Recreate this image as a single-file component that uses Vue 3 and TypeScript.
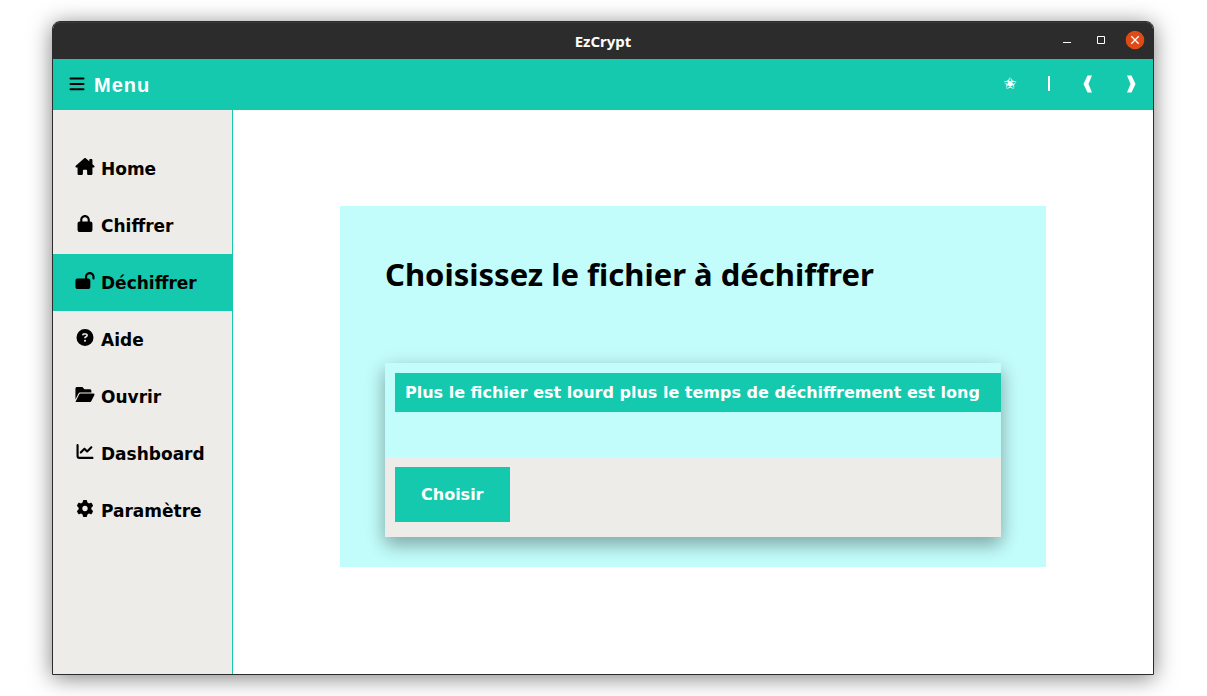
<script setup lang="ts">
import { ref } from 'vue'

interface NavItem {
  label: string
  width: number
  path: string
}

const active = ref('Déchiffrer')

const items: NavItem[] = [
  {
    label: 'Home',
    width: 576,
    path: 'M575.8 255.5c0 18-15 32.1-32 32.1h-32l.7 160.2c0 2.7-.2 5.4-.5 8.1V472c0 22.1-17.9 40-40 40H392c-22.1 0-40-17.9-40-40V384c0-17.7-14.3-32-32-32H256c-17.7 0-32 14.3-32 32v88c0 22.1-17.9 40-40 40H104c-22.1 0-40-17.9-40-40V287.6H32c-18 0-32-14-32-32.1c0-9 3-17 10-24L266.4 8c7-7 15-8 22-8s15 2 21 7L416 100.7V64c0-17.7 14.3-32 32-32h32c17.7 0 32 14.3 32 32v121l52.8 46.5c8 7 12 15 11 24z',
  },
  {
    label: 'Chiffrer',
    width: 448,
    path: 'M80 192V144C80 64.47 144.5 0 224 0C303.5 0 368 64.47 368 144V192H384C419.3 192 448 220.7 448 256V448C448 483.3 419.3 512 384 512H64C28.65 512 0 483.3 0 448V256C0 220.7 28.65 192 64 192H80zM144 192H304V144C304 99.82 268.2 64 224 64C179.8 64 144 99.82 144 144V192z',
  },
  {
    label: 'Déchiffrer',
    width: 576,
    path: 'M352 192H384C419.3 192 448 220.7 448 256V448C448 483.3 419.3 512 384 512H64C28.65 512 0 483.3 0 448V256C0 220.7 28.65 192 64 192H288V144C288 64.47 352.5 0 432 0C511.5 0 576 64.47 576 144V192C576 209.7 561.7 224 544 224C526.3 224 512 209.7 512 192V144C512 99.82 476.2 64 432 64C387.8 64 352 99.82 352 144V192z',
  },
  {
    label: 'Aide',
    width: 512,
    path: 'M256 512A256 256 0 1 0 256 0a256 256 0 1 0 0 512zM169.8 165.3c7.9-22.3 29.1-37.3 52.8-37.3h58.3c34.9 0 63.1 28.3 63.1 63.1c0 22.6-12.1 43.5-31.7 54.8L280 264.4c-.2 13-10.9 23.6-24 23.6c-13.3 0-24-10.7-24-24V250.5c0-8.6 4.6-16.5 12.1-20.8l44.3-25.4c4.7-2.7 7.6-7.7 7.6-13.1c0-8.4-6.8-15.1-15.1-15.1H222.6c-3.4 0-6.4 2.1-7.5 5.3l-.4 1.2c-4.4 12.5-18.2 19-30.6 14.6s-19-18.2-14.6-30.6l.4-1.2zM224 352a32 32 0 1 1 64 0 32 32 0 1 1-64 0z',
  },
  {
    label: 'Ouvrir',
    width: 576,
    path: 'M147.8 192H480V144C480 117.5 458.5 96 432 96h-160l-64-64h-160C21.49 32 0 53.49 0 80v328.4l90.54-181.1C101.4 205.6 123.4 192 147.8 192zM543.1 224H147.8C135.7 224 124.6 230.8 119.2 241.7L0 480h447.1c12.12 0 23.2-6.852 28.62-17.69l96-192C583.2 249 567.7 224 543.1 224z',
  },
  {
    label: 'Dashboard',
    width: 512,
    path: 'M64 400C64 408.8 71.16 416 80 416H480C497.7 416 512 430.3 512 448C512 465.7 497.7 480 480 480H80C35.82 480 0 444.2 0 400V64C0 46.33 14.33 32 32 32C49.67 32 64 46.33 64 64V400zM342.6 278.6C330.1 291.1 309.9 291.1 297.4 278.6L240 221.3L150.6 310.6C138.1 323.1 117.9 323.1 105.4 310.6C92.88 298.1 92.88 277.9 105.4 265.4L217.4 153.4C229.9 140.9 250.1 140.9 262.6 153.4L320 210.7L425.4 105.4C437.9 92.88 458.1 92.88 470.6 105.4C483.1 117.9 483.1 138.1 470.6 150.6L342.6 278.6z',
  },
  {
    label: 'Paramètre',
    width: 512,
    path: 'M495.9 166.6c3.2 8.7 .5 18.4-6.4 24.6l-43.3 39.4c1.1 8.3 1.7 16.8 1.7 25.4s-.6 17.1-1.7 25.4l43.3 39.4c6.9 6.2 9.6 15.9 6.4 24.6c-4.4 11.9-9.7 23.3-15.8 34.3l-4.7 8.1c-6.6 11-14 21.4-22.1 31.2c-5.9 7.2-15.7 9.6-24.5 6.8l-55.7-17.7c-13.4 10.3-28.2 18.9-44 25.4l-12.5 57.1c-2 9.1-9 16.3-18.2 17.8c-13.8 2.3-28 3.5-42.5 3.5s-28.7-1.2-42.5-3.5c-9.2-1.5-16.2-8.7-18.2-17.8l-12.5-57.1c-15.8-6.5-30.6-15.1-44-25.4L83.1 425.9c-8.8 2.8-18.6 .3-24.5-6.8c-8.1-9.8-15.5-20.2-22.1-31.2l-4.7-8.1c-6.1-11-11.4-22.4-15.8-34.3c-3.2-8.7-.5-18.4 6.4-24.6l43.3-39.4C64.6 273.1 64 264.6 64 256s.6-17.1 1.7-25.4L22.4 191.2c-6.9-6.2-9.6-15.9-6.4-24.6c4.4-11.9 9.7-23.3 15.8-34.3l4.7-8.1c6.6-11 14-21.4 22.1-31.2c5.9-7.2 15.7-9.6 24.5-6.8l55.7 17.7c13.4-10.3 28.2-18.9 44-25.4l12.5-57.1c2-9.1 9-16.3 18.2-17.8C227.3 1.2 241.5 0 256 0s28.7 1.2 42.5 3.5c9.2 1.5 16.2 8.7 18.2 17.8l12.5 57.1c15.8 6.5 30.6 15.1 44 25.4l55.7-17.7c8.8-2.8 18.6-.3 24.5 6.8c8.1 9.8 15.5 20.2 22.1 31.2l4.7 8.1c6.1 11 11.4 22.4 15.8 34.3zM256 336a80 80 0 1 0 0-160 80 80 0 1 0 0 160z',
  },
]
</script>

<template>
  <div class="desktop">
    <div class="window">
      <header class="titlebar">
        <span class="title">EzCrypt</span>
        <div class="controls">
          <button type="button" aria-label="Réduire">
            <svg width="20" height="20" viewBox="0 0 20 20"><path d="M6 12.5h8" stroke="#fff" /></svg>
          </button>
          <button type="button" aria-label="Agrandir">
            <svg width="20" height="20" viewBox="0 0 20 20"><path d="M6.500 6.500h7v7h-7z" fill="none" stroke="#fff" /></svg>
          </button>
          <button type="button" aria-label="Fermer">
            <svg width="20" height="20" viewBox="0 0 20 20">
              <circle cx="10" cy="10" r="9.300" fill="#e04a16" />
              <path d="M6.300 6.300l7.400 7.400M13.700 6.300l-7.400 7.400" stroke="#fff" stroke-width="1.300" />
            </svg>
          </button>
        </div>
      </header>

      <div class="toolbar">
        <button type="button" class="menu">
          <svg width="16" height="16" viewBox="0 0 16 16" aria-hidden="true">
            <path d="M1.500 2.500h13M1.500 8h13M1.500 13.300h13" stroke="#000" stroke-width="2" stroke-linecap="round" />
          </svg>
          <span>Menu</span>
        </button>
        <div class="tools">
          <button type="button" aria-label="Favoris">✬</button>
          <span class="bar" aria-hidden="true"></span>
          <button type="button" aria-label="Précédent">
            <svg width="10" height="18" viewBox="0 0 10 18"><path d="M4.500 .5H9L5.500 9 9 17.500H4.500L.5 9z" fill="#fff" /></svg>
          </button>
          <button type="button" aria-label="Suivant">
            <svg width="10" height="18" viewBox="0 0 10 18"><path d="M5.500 .5H1L4.500 9 1 17.500h4.500L9.500 9z" fill="#fff" /></svg>
          </button>
        </div>
      </div>

      <div class="body">
        <nav class="sidebar">
          <a
            v-for="item in items"
            :key="item.label"
            href="#"
            :class="{ active: item.label === active }"
            @click.prevent="active = item.label"
          >
            <svg :viewBox="`0 0 ${item.width} 512`" aria-hidden="true"><path :d="item.path" /></svg>
            <span>{{ item.label }}</span>
          </a>
        </nav>
        <main class="content">
          <section class="card">
            <h1>Choisissez le fichier à déchiffrer</h1>
            <div class="panel">
              <div class="info">
                <p>Plus le fichier est lourd plus le temps de déchiffrement est long</p>
              </div>
              <div class="actions">
                <button type="button">Choisir</button>
              </div>
            </div>
          </section>
        </main>
      </div>
    </div>
  </div>
</template>

<style>
body {
  margin: 0;
  background: #fff;
}
</style>

<style scoped>
* {
  box-sizing: border-box;
}

button {
  border: 0;
  padding: 0;
  background: none;
  font: inherit;
  color: inherit;
  cursor: pointer;
}

svg {
  display: block;
}

.desktop {
  display: flex;
  min-height: 100vh;
  padding: 21px 53px 21px 52px;
  font-family: "DejaVu Sans", sans-serif;
}

.window {
  flex: 1;
  display: flex;
  flex-direction: column;
  min-width: 0;
  border: 1px solid #2c2c2c;
  border-radius: 8px 8px 0 0;
  background: #fff;
  box-shadow: 0 3px 22px rgba(0, 0, 0, 0.5);
}

.titlebar {
  display: grid;
  grid-template-columns: 1fr auto 1fr;
  align-items: center;
  height: 37px;
  padding-right: 8px;
  padding-left: 8px;
  border-radius: 7px 7px 0 0;
  background: #2c2c2c;
  box-shadow: inset 0 1px #3a3a3a;
  color: #fff;
}

.title {
  grid-column: 2;
  font: bold 15px/20px "Noto Sans", sans-serif;
}

.controls {
  display: flex;
  justify-content: flex-end;
  gap: 14px;
  padding-bottom: 2px;
}

.toolbar {
  display: flex;
  justify-content: space-between;
  align-items: center;
  height: 51px;
  padding: 0 17px 0 16px;
  background: #14c9ad;
  color: #fff;
}

.menu {
  display: flex;
  align-items: center;
  gap: 9px;
  font: bold 20px/24px "Liberation Sans", Arial, sans-serif;
  letter-spacing: 1px;
}

.menu svg {
  margin-bottom: 2px;
}

.tools {
  display: flex;
  align-items: center;
  gap: 33px;
  padding-bottom: 2px;
}

.tools button {
  display: flex;
  justify-content: center;
  width: 10px;
  font-size: 16px;
  font-weight: bold;
  line-height: 18px;
}

.bar {
  width: 2px;
  height: 15px;
  background: #fff;
}

.body {
  flex: 1;
  display: flex;
}

.sidebar {
  flex: none;
  width: 180px;
  padding-top: 30px;
  border-right: 1px solid #14c9ad;
  background: #edece8;
}

.sidebar a {
  display: flex;
  align-items: center;
  gap: 6px;
  height: 57px;
  padding-left: 22px;
  color: #000;
  font-size: 17px;
  font-weight: bold;
  line-height: 20px;
  text-decoration: none;
}

.sidebar a.active {
  background: #14c9ad;
}

.sidebar svg {
  width: 20px;
  height: 17px;
  margin-bottom: 5px;
}

.content {
  flex: 1;
  min-width: 0;
  padding: 96px 107px 0;
}

.card {
  padding: 45px 45px 30px;
  background: #c2fdfb;
}

h1 {
  margin: 0 0 66px;
  color: #000;
  font: bold 31px/46px "Noto Sans", sans-serif;
  white-space: nowrap;
}

.panel {
  box-shadow: 0 8px 16px rgba(0, 0, 0, 0.2), 0 6px 20px rgba(0, 0, 0, 0.19);
}

.info {
  display: flex;
  align-items: flex-start;
  min-height: 94px;
  padding: 10px;
}

.info p {
  flex: none;
  margin: 0;
  padding: 10px 21px 10px 10px;
  background: #14c9ad;
  color: #fff;
  font-size: 16px;
  font-weight: bold;
  line-height: 19px;
  white-space: nowrap;
}

.actions {
  padding: 10px 10px 15px;
  background: #edece8;
}

.actions button {
  display: block;
  height: 55px;
  padding: 0 26px;
  background: #14c9ad;
  color: #fff;
  font-size: 16px;
  font-weight: bold;
}
</style>
